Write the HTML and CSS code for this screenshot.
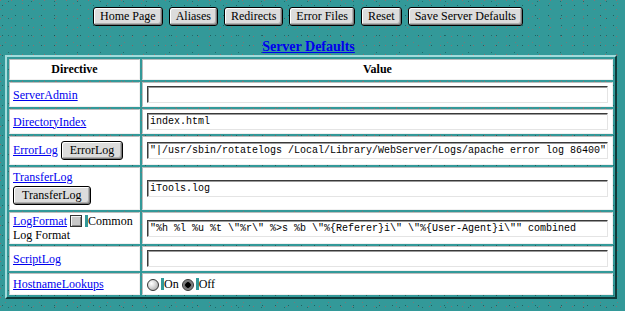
FILE: index.html
```html
<!DOCTYPE html>
<html>
<head>
<meta charset="utf-8">
<title>Server Defaults</title>
<link rel="stylesheet" href="styles.css">
</head>
<body>
<div class="toolbar">
  <button class="btn">Home Page</button>
  <button class="btn">Aliases</button>
  <button class="btn">Redirects</button>
  <button class="btn">Error Files</button>
  <button class="btn">Reset</button>
  <button class="btn">Save Server Defaults</button>
</div>
<h1 class="title"><a href="#">Server Defaults</a></h1>
<table class="grid">
  <colgroup><col class="c-dir"><col class="c-val"></colgroup>
  <tr><th>Directive</th><th>Value</th></tr>
  <tr><td class="dir"><a href="#">ServerAdmin</a></td><td class="val"><input class="field" type="text" value=""></td></tr>
  <tr><td class="dir"><a href="#">DirectoryIndex</a></td><td class="val"><input class="field" type="text" value="index.html"></td></tr>
  <tr><td class="dir"><a href="#">ErrorLog</a> <button class="btn btn-sm">ErrorLog</button></td><td class="val"><input class="field" type="text" value="&quot;|/usr/sbin/rotatelogs /Local/Library/WebServer/Logs/apache error log 86400&quot;"></td></tr>
  <tr><td class="dir"><a href="#">TransferLog</a> <button class="btn btn-sm">TransferLog</button></td><td class="val"><input class="field" type="text" value="iTools.log"></td></tr>
  <tr><td class="dir lf"><a href="#">LogFormat</a> <input class="check" type="checkbox"> <span class="bar"></span><span>Common</span><br><span>Log Format</span></td><td class="val"><input class="field" type="text" value="&quot;%h %l %u %t \&quot;%r\&quot; %&gt;s %b \&quot;%{Referer}i\&quot; \&quot;%{User-Agent}i\&quot;&quot; combined"></td></tr>
  <tr><td class="dir"><a href="#">ScriptLog</a></td><td class="val"><input class="field" type="text" value=""></td></tr>
  <tr><td class="dir hl"><a href="#">HostnameLookups</a></td><td class="val hl"><input class="radio" type="radio" name="hl"><span class="bar"></span>On <input class="radio" type="radio" name="hl" checked><span class="bar"></span>Off</td></tr>
</table>
</body>
</html>
```

FILE: styles.css
```css
html, body {
  margin: 0;
  padding: 0;
}
body {
  background-color: #339999;
  background-image:
    radial-gradient(circle at 0.5px 0.5px, rgba(176, 96, 96, 0.7) 0.5px, transparent 0.9px),
    radial-gradient(circle at 0.5px 0.5px, rgba(176, 96, 96, 0.55) 0.5px, transparent 0.9px),
    radial-gradient(circle at 0.5px 0.5px, rgba(20, 70, 70, 0.65) 0.5px, transparent 0.9px),
    radial-gradient(circle at 0.5px 0.5px, rgba(20, 70, 70, 0.55) 0.5px, transparent 0.9px);
  background-size: 11px 9px, 17px 13px, 13px 10px, 23px 17px;
  background-position: 0 0, 5px 3px, 2px 5px, 8px 1px;
  font-family: "Liberation Serif", "Times New Roman", serif;
  font-size: 12px;
  line-height: 14px;
  color: #000;
}
a {
  color: #0000ee;
  text-decoration: underline;
}
.toolbar {
  display: flex;
  justify-content: center;
  gap: 6px;
  padding: 7px 9px 0 0;
}
.btn {
  height: 19px;
  padding: 0 6px;
  margin: 0;
  font-family: "Liberation Serif", "Times New Roman", serif;
  font-size: 12px;
  line-height: 15px;
  color: #000;
  background: #dcdcdc;
  border: 1px solid #000;
  border-radius: 3px;
  box-shadow: inset 1px 1px 0 #ffffff, inset -1px -1px 0 #7a7a7a, inset -2px -2px 0 #b0b0b0;
}
.btn-sm {
  padding: 0 8px;
  margin: 2px 0;
}
.title {
  margin: 12px 0 0;
  padding-right: 8px;
  text-align: center;
  font-size: 14px;
  line-height: 17px;
  font-weight: bold;
}
.grid {
  margin: 0 0 0 5px;
  width: 612px;
  table-layout: fixed;
  border-collapse: separate;
  border-spacing: 2px;
  border: 2px solid;
  border-color: #a3dcdc #0e3b3b #0e3b3b #a3dcdc;
}
.c-dir {
  width: 131px;
}
th, td {
  background: #ffffff;
  border: 1px solid;
  border-color: #bdbdbd #f0f0f0 #f0f0f0 #bdbdbd;
  padding: 2px 3px;
  vertical-align: middle;
}
th {
  font-weight: bold;
  line-height: 15px;
  text-align: center;
}
td.val {
  padding: 2px 4px;
}
td.lf {
  padding-top: 1px;
  padding-bottom: 1px;
  line-height: 14px;
}
td.hl {
  padding-top: 3px;
  padding-bottom: 3px;
}
.field {
  display: block;
  box-sizing: border-box;
  width: 100%;
  height: 17px;
  margin: 1px 0;
  padding: 0 2px;
  font-family: "Liberation Mono", "Courier New", monospace;
  font-size: 10px;
  color: #000;
  background: #fff;
  border: 1px solid;
  border-color: #3a3a3a #e4e4e4 #e4e4e4 #3a3a3a;
  box-shadow: inset 1px 1px 0 #9a9a9a;
  outline: none;
}
.check {
  appearance: none;
  -webkit-appearance: none;
  width: 12px;
  height: 12px;
  margin: 0;
  vertical-align: -2px;
  background: #c8c8c8;
  border: 1px solid #333;
  box-shadow: inset 1px 1px 0 #f4f4f4, inset -1px -1px 0 #888;
}
.bar {
  display: inline-block;
  width: 3px;
  height: 12px;
  vertical-align: -2px;
  background: #339999;
}
.radio {
  appearance: none;
  -webkit-appearance: none;
  width: 12px;
  height: 12px;
  margin: 0 2px 0 0;
  vertical-align: -3px;
  border-radius: 50%;
  border: 1px solid #333;
  background: radial-gradient(circle at 35% 35%, #ffffff 0, #e0e0e0 35%, #9a9a9a 100%);
}
.radio:checked {
  background: radial-gradient(circle at 50% 50%, #000 0, #000 2.5px, #6a6a6a 3px, #b4b4b4 100%);
}
```
